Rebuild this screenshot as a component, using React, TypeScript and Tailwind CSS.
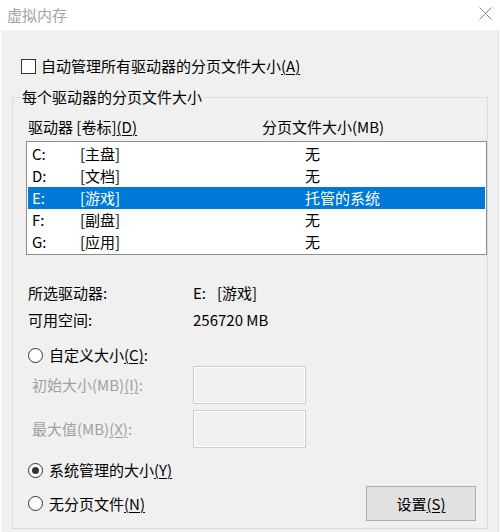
import type { ReactNode } from "react";

const drives = [
  { letter: "C:", label: "[主盘]", size: "无" },
  { letter: "D:", label: "[文档]", size: "无" },
  { letter: "E:", label: "[游戏]", size: "托管的系统" },
  { letter: "F:", label: "[副盘]", size: "无" },
  { letter: "G:", label: "[应用]", size: "无" },
];

function Key({ children }: { children: ReactNode }) {
  return <span className="underline underline-offset-2 decoration-1">{children}</span>;
}

function Radio({ checked }: { checked?: boolean }) {
  return (
    <span className="w-[15px] h-[15px] rounded-full border border-[#333333] bg-white flex items-center justify-center shrink-0">
      {checked && <span className="w-[7px] h-[7px] rounded-full bg-[#333333]" />}
    </span>
  );
}

function SizeBox() {
  return (
    <div className="w-[113px] h-[38px] border border-[#cccccc] bg-[#f0f0f0] shadow-[inset_0_0_0_1px_#ffffff]" />
  );
}

export default function App() {
  const font = "font-['Noto_Sans_CJK_SC','Noto_Sans',sans-serif]";

  return (
    <div className={`w-[500px] h-[532px] bg-white overflow-hidden text-[15px] leading-[20px] text-black ${font}`}>
      {/* title bar */}
      <div className="h-[30px] bg-white flex items-center justify-between pl-[7px] pr-[8px]">
        <span className="text-[#a3a3a3] text-[15px]">虚拟内存</span>
        <svg width="13" height="13" viewBox="0 0 13 13" className="mt-[-4px]">
          <path d="M0.5 0.5 L12.5 12.5 M12.5 0.5 L0.5 12.5" stroke="#8a8a8a" strokeWidth="1" />
        </svg>
      </div>

      <div className="h-[502px] w-[498px] ml-[1px] bg-[#f0f0f0] border-r border-[#e2e2e2] pl-[11px] pr-[10px]">
        {/* auto manage */}
        <div className="pt-[26px] flex items-center h-[46px]">
          <span className="ml-[9px] w-[15px] h-[15px] border border-[#333333] bg-white shrink-0" />
          <span className="ml-[5px]">
            自动管理所有驱动器的分页文件大小<Key>(A)</Key>
          </span>
        </div>

        <fieldset className="mt-[11px] border border-[#dcdcdc] pb-[7px]">
          <legend className="ml-[8px] px-[1px] leading-[20px]">每个驱动器的分页文件大小</legend>

          <div className="mt-[10px] flex h-[20px] items-center">
            <span className="ml-[15px] w-[234px]">
              驱动器 [卷标]<Key>(D)</Key>
            </span>
            <span>分页文件大小(MB)</span>
          </div>

          <div className="mt-[4px] ml-[13px] border border-[#8c8c8c] bg-white p-[1px]">
            {drives.map((d) => {
              const selected = d.letter === "E:";
              return (
                <div
                  key={d.letter}
                  className={`h-[22px] flex items-center ${selected ? "bg-[#0078d7] text-white" : ""}`}
                >
                  <span className="ml-[4px] w-[48px]">{d.letter}</span>
                  <span className="w-[225px]">{d.label}</span>
                  <span>{d.size}</span>
                </div>
              );
            })}
          </div>

          <div className="mt-[28px] flex h-[20px] items-center">
            <span className="ml-[15px] w-[165px]">所选驱动器:</span>
            <span className="w-[24px]">E:</span>
            <span>[游戏]</span>
          </div>
          <div className="mt-[7px] flex h-[20px] items-center">
            <span className="ml-[15px] w-[165px]">可用空间:</span>
            <span>256720 MB</span>
          </div>

          <div className="mt-[15px] flex h-[20px] items-center">
            <span className="ml-[15px]">
              <Radio />
            </span>
            <span className="ml-[6px]">
              自定义大小<Key>(C)</Key>:
            </span>
          </div>

          <div className="mt-[1px] flex h-[38px] items-center text-[#a0a0a0]">
            <span className="ml-[19px] w-[161px]">
              初始大小(MB)<Key>(I)</Key>:
            </span>
            <SizeBox />
          </div>
          <div className="mt-[6px] flex h-[38px] items-center text-[#a0a0a0]">
            <span className="ml-[19px] w-[161px]">
              最大值(MB)<Key>(X)</Key>:
            </span>
            <SizeBox />
          </div>

          <div className="mt-[12px] flex h-[20px] items-center">
            <span className="ml-[15px]">
              <Radio checked />
            </span>
            <span className="ml-[6px]">
              系统管理的大小<Key>(Y)</Key>
            </span>
          </div>

          <div className="mt-[6px] flex h-[35px] items-center">
            <span className="ml-[15px]">
              <Radio />
            </span>
            <span className="ml-[6px]">
              无分页文件<Key>(N)</Key>
            </span>
            <button className="ml-auto mr-[11px] w-[110px] h-[35px] border border-[#adadad] bg-[#e1e1e1] text-[15px]">
              设置<Key>(S)</Key>
            </button>
          </div>
        </fieldset>
      </div>
    </div>
  );
}
